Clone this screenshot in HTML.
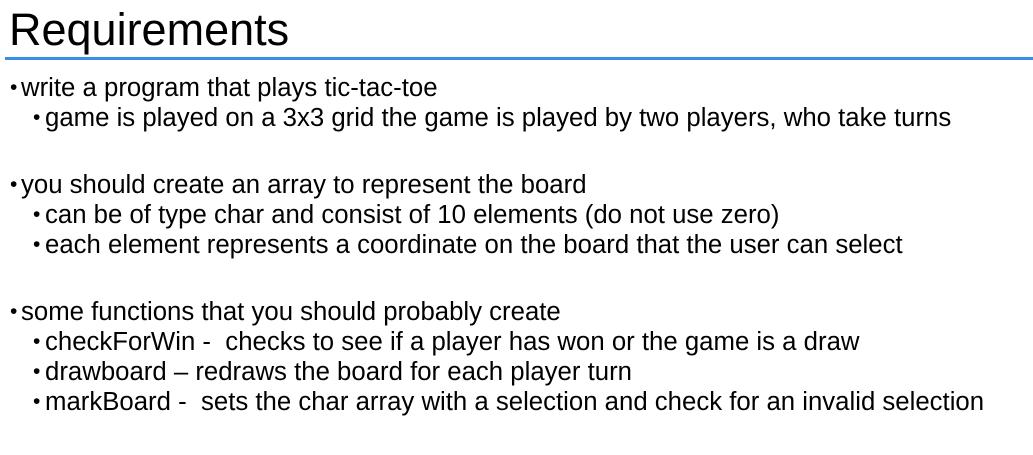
<!DOCTYPE html>
<html><head><style>
body{margin:0;width:1033px;height:455px;background:#fff;overflow:hidden;font-family:"Liberation Sans",Arial,sans-serif;color:#000;position:relative}
.t{position:absolute;left:9px;top:4px;font-size:45px;line-height:52px}
.bar{position:absolute;left:5px;right:0;top:57px;height:3px;background:#3b8ee6}
.l{position:absolute;font-size:25.5px;line-height:28px;white-space:nowrap;transform:scaleX(1.01);transform-origin:left}
.b{position:absolute;font-size:21px;line-height:28px}
</style></head><body>
<div class="t">Requirements</div>
<div class="bar"></div>
<div class="b" style="left:10px;top:74px">•</div><div class="l" style="left:21px;top:74px">write a program that plays tic-tac-toe</div>
<div class="b" style="left:33px;top:104px">•</div><div class="l" style="left:45px;top:104px">game is played on a 3x3 grid the game is played by two players, who take turns</div>
<div class="b" style="left:10px;top:171px">•</div><div class="l" style="left:21px;top:171px">you should create an array to represent the board</div>
<div class="b" style="left:33px;top:201px">•</div><div class="l" style="left:45px;top:201px">can be of type char and consist of 10 elements (do not use zero)</div>
<div class="b" style="left:33px;top:231px">•</div><div class="l" style="left:45px;top:231px">each element represents a coordinate on the board that the user can select</div>
<div class="b" style="left:10px;top:298px">•</div><div class="l" style="left:21px;top:298px">some functions that you should probably create</div>
<div class="b" style="left:33px;top:328px">•</div><div class="l" style="left:45px;top:328px">checkForWin -&nbsp; checks to see if a player has won or the game is a draw</div>
<div class="b" style="left:33px;top:358px">•</div><div class="l" style="left:45px;top:358px">drawboard – redraws the board for each player turn</div>
<div class="b" style="left:33px;top:388px">•</div><div class="l" style="left:45px;top:388px">markBoard -&nbsp; sets the char array with a selection and check for an invalid selection</div>
</body></html>
